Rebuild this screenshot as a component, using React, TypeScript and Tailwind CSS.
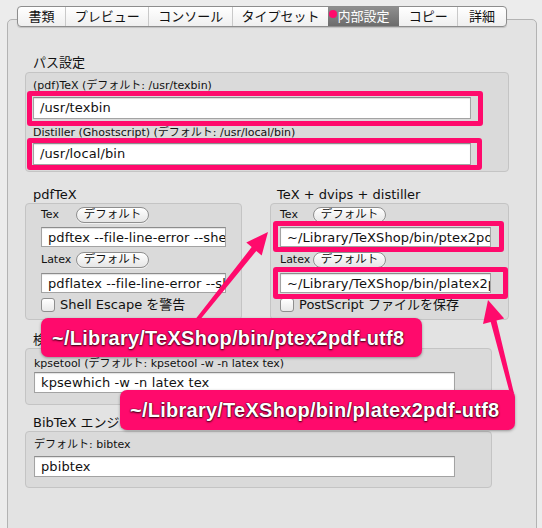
import React from "react";

const tabs = [
  { label: "書類", w: 47 },
  { label: "プレビュー", w: 84 },
  { label: "コンソール", w: 84 },
  { label: "タイプセット", w: 96 },
  { label: "内部設定", w: 72, active: true },
  { label: "コピー", w: 58 },
  { label: "詳細", w: 49 },
];

function Field({ w, h = 22, text }: { w: number; h?: number; text: string }) {
  return (
    <div
      className="overflow-hidden whitespace-nowrap border border-[#a3a3a3] border-t-[#8c8c8c] bg-white pl-[6px] text-[13px] leading-[19px] tracking-[0.1px] shadow-[inset_0_1px_1px_rgba(0,0,0,0.12)]"
      style={{ width: w, height: h }}
    >
      {text}
    </div>
  );
}

function DefaultButton() {
  return (
    <div className="flex h-[16px] w-[73px] items-center justify-center rounded-full border border-[#8e8e8e] bg-gradient-to-b from-white to-[#e6e6e6] text-[11.5px] leading-none shadow-[0_1px_0_rgba(255,255,255,0.6)]">
      デフォルト
    </div>
  );
}

function Check({ label }: { label: string }) {
  return (
    <div className="flex h-[16px] items-center gap-[5px] text-[13px]">
      <div className="h-[14px] w-[14px] rounded-[3px] border border-[#8f8f8f] bg-gradient-to-b from-white to-[#e9e9e9]" />
      <span>{label}</span>
    </div>
  );
}

function EngineBox({
  width,
  pl,
  labelW,
  fieldW,
  tex,
  latex,
  check,
}: {
  width: number;
  pl: number;
  labelW: number;
  fieldW: number;
  tex: string;
  latex: string;
  check: string;
}) {
  return (
    <div
      className="h-[117px] rounded-[4px] border border-[#c4c4c4] bg-[#dadada] pt-[3px]"
      style={{ width, paddingLeft: pl }}
    >
      <div className="flex h-[16px] items-center">
        <span className="text-[11px]" style={{ width: labelW }}>Tex</span>
        <DefaultButton />
      </div>
      <div className="mt-[4px]">
        <Field w={fieldW} h={20} text={tex} />
      </div>
      <div className="mt-[5px] flex h-[16px] items-center">
        <span className="text-[11px]" style={{ width: labelW }}>Latex</span>
        <DefaultButton />
      </div>
      <div className="mt-[5px]">
        <Field w={fieldW} h={20} text={latex} />
      </div>
      <div className="mt-[4px]">
        <Check label={check} />
      </div>
    </div>
  );
}

export default function App() {
  return (
    <div className="relative h-[528px] w-[542px] overflow-hidden bg-[#ececec] font-['DejaVu_Sans','Noto_Sans_CJK_JP',sans-serif] text-[#111]">
      {/* Tabs */}
      <div className="relative z-10 ml-[17px] mt-[6px] flex h-[21px] w-[490px] overflow-hidden rounded-[4px] border border-[#8d8d8d] bg-gradient-to-b from-white to-[#efefef] shadow-[0_1px_1px_rgba(0,0,0,0.15)]">
        {tabs.map((t, i) => (
          <div
            key={t.label}
            className={
              t.active
                ? "relative flex items-center justify-center bg-gradient-to-b from-[#8f8f8f] to-[#6c6c6c] text-[13px] text-white"
                : "flex items-center justify-center text-[13px]" +
                  (i > 0 && !tabs[i - 1].active ? " border-l border-[#c9c9c9]" : "")
            }
            style={{ width: t.w }}
          >
            {t.active && (
              <span className="absolute left-[1px] top-[3px] h-[8px] w-[8px] rounded-full bg-[#ff0a6c]" />
            )}
            {t.label}
          </div>
        ))}
      </div>

      {/* Panel */}
      <div className="-mt-[8px] ml-[7px] h-[520px] w-[530px] rounded-[5px] border border-[#b3b3b3] bg-[#e3e3e3] pl-[17px] pt-[35px]">
        <div className="ml-[8px] text-[13px] leading-[16px]">パス設定</div>
        <div className="mt-[1px] h-[100px] w-[484px] rounded-[4px] border border-[#c4c4c4] bg-[#dadada] pl-[7px] pt-[6px]">
          <div className="text-[11px] leading-[14px]">(pdf)TeX (デフォルト: /usr/texbin)</div>
          <div className="mt-[4px]">
            <Field w={438} text="/usr/texbin" />
          </div>
          <div className="mt-[7px] text-[11px] leading-[14px]">Distiller (Ghostscript) (デフォルト: /usr/local/bin)</div>
          <div className="mt-[3px]">
            <Field w={438} text="/usr/local/bin" />
          </div>
        </div>

        <div className="mt-[15px] flex gap-[28px]">
          <div>
            <div className="ml-[8px] text-[13px] leading-[16px]">pdfTeX</div>
            <EngineBox
              width={217}
              pl={15}
              labelW={35}
              fieldW={185}
              tex="pdftex --file-line-error --shell-escape"
              latex="pdflatex --file-line-error --shell-escape"
              check="Shell Escape を警告"
            />
          </div>
          <div>
            <div className="ml-[7px] text-[13px] leading-[16px]">TeX + dvips + distiller</div>
            <EngineBox
              width={239}
              pl={9}
              labelW={33}
              fieldW={211}
              tex="~/Library/TeXShop/bin/ptex2pdf-utf8"
              latex="~/Library/TeXShop/bin/platex2pdf-utf8"
              check="PostScript ファイルを保存"
            />
          </div>
        </div>

        <div className="ml-[8px] mt-[12px] text-[13px] leading-[16px]">検索ツール</div>
        <div className="h-[57px] w-[467px] rounded-[4px] border border-[#c4c4c4] bg-[#dadada] pl-[8px] pt-[8px]">
          <div className="text-[11px] leading-[14px]">kpsetool (デフォルト: kpsetool -w -n latex tex)</div>
          <div className="mt-[1px]">
            <Field w={421} h={21} text="kpsewhich -w -n latex tex" />
          </div>
        </div>

        <div className="ml-[8px] mt-[10px] text-[13px] leading-[16px]">BibTeX エンジン</div>
        <div className="h-[57px] w-[467px] rounded-[4px] border border-[#c4c4c4] bg-[#dadada] pl-[8px] pt-[6px]">
          <div className="text-[11px] leading-[14px]">デフォルト: bibtex</div>
          <div className="mt-[4px]">
            <Field w={421} h={21} text="pbibtex" />
          </div>
        </div>
      </div>

      {/* Highlight frames */}
      <div className="absolute left-[27px] top-[91px] h-[35px] w-[456px] rounded-[3px] border-[5px] border-[#ff0a6c]" />
      <div className="absolute left-[27px] top-[138px] h-[32px] w-[455px] rounded-[3px] border-[5px] border-[#ff0a6c]" />
      <div className="absolute left-[273px] top-[221px] h-[31px] w-[231px] rounded-[3px] border-[5px] border-[#ff0a6c]" />
      <div className="absolute left-[273px] top-[267px] h-[32px] w-[235px] rounded-[3px] border-[5px] border-[#ff0a6c]" />

      {/* Arrows */}
      <svg className="pointer-events-none absolute left-0 top-0" width="542" height="528" viewBox="0 0 542 528">
        <polygon
          points="268,232 246.3,242.6 251.7,247.1 194.8,320 198.2,322 256.3,250.9 261.7,255.4"
          fill="#ff0a6c"
        />
        <polygon
          points="488,300 483,324.1 490.7,322.1 510.1,394 513.9,393 496.5,320.5 504.2,318.5"
          fill="#ff0a6c"
        />
      </svg>

      {/* Callouts */}
      <div className="absolute left-[41px] top-[318px] flex h-[39px] w-[381px] items-center rounded-[7px] bg-[#ff0a6c] pl-[11px] font-['Liberation_Sans',sans-serif] text-[20px] font-bold tracking-[0.25px] text-white shadow-[0_1px_3px_rgba(0,0,0,0.35)] [text-shadow:0_0_1px_#4a0018,0_0_1px_#4a0018,0_1px_2px_#300010]">
        ~/Library/TeXShop/bin/ptex2pdf-utf8
      </div>
      <div className="absolute left-[120px] top-[390px] flex h-[40px] w-[395px] items-center rounded-[7px] bg-[#ff0a6c] pl-[10px] font-['Liberation_Sans',sans-serif] text-[20px] font-bold tracking-[0.25px] text-white shadow-[0_1px_3px_rgba(0,0,0,0.35)] [text-shadow:0_0_1px_#4a0018,0_0_1px_#4a0018,0_1px_2px_#300010]">
        ~/Library/TeXShop/bin/platex2pdf-utf8
      </div>
    </div>
  );
}
